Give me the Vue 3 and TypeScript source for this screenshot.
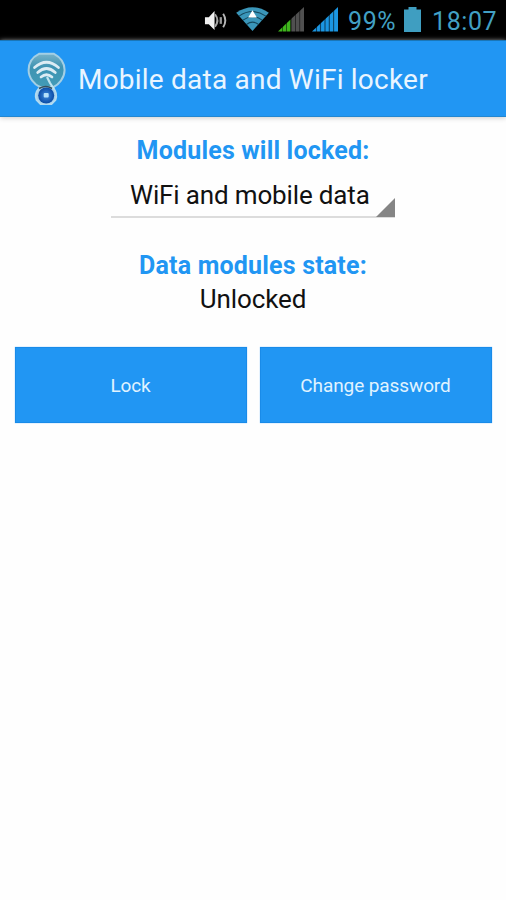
<script setup lang="ts">
import { ref } from 'vue'

const battery = '99%'
const clock = '18:07'
const selectedModule = ref('WiFi and mobile data')
const locked = ref(false)
</script>

<template>
  <div class="screen">
    <header class="status">
      <svg class="sound" viewBox="0 0 24 24">
        <path d="M1 8.500h4L11 2v20L5 16H1z" fill="#f0f0f0" />
        <path d="M11.500 5.500q5 6.500 0 13" fill="none" stroke="#a5a5a5" stroke-width="2" />
        <path d="M17.500 8.500v7" stroke="#9a9a9a" stroke-width="2.400" />
        <path d="M20 5q4.500 7 0 14" fill="none" stroke="#b5b5b5" stroke-width="2" />
      </svg>
      <svg class="wifi" viewBox="0 0 34 25">
        <path d="M0 6Q17-5.500 34 6L17 25z" fill="#3a96b9" />
        <path d="M3 9.500Q17 0 31 9.500M7 13.700Q17 6.500 27 13.700M11 18Q17 13.500 23 18" fill="none" stroke="#14475c" stroke-width="1.100" />
        <path d="M17 3.500l4.500 7.500h-9z" fill="#fff" />
      </svg>
      <svg class="signal" viewBox="0 0 26 25">
        <path d="M0 24.500L12.500 12.500v12z" fill="#3fb51d" />
        <path d="M13 12L26 0v24.500H13z" fill="#505050" />
        <path d="M4.500 18v7M8.500 14v11M13.200 10v15M17.500 6v19M21.700 2v23" stroke="#000" stroke-opacity=".5" stroke-width="1" />
      </svg>
      <svg class="signal second" viewBox="0 0 26 25">
        <path d="M0 24.500L26 0v24.500z" fill="#1b96e2" />
        <path d="M4.500 18v7M8.500 14v11M13 10v15M17.300 6v19M21.600 2v23" stroke="#000" stroke-opacity=".55" stroke-width="1.100" />
      </svg>
      <span class="percent">{{ battery }}</span>
      <svg class="battery" viewBox="0 0 17 25"><path d="M0 2.500h4.500V0h8v2.500H17V25H0z" fill="#3f9ec1" /></svg>
      <span class="clock">{{ clock }}</span>
    </header>
    <div class="appbar">
      <svg class="logo" viewBox="0 0 40 54">
        <defs>
          <linearGradient id="disc" x2="0" y2="1">
            <stop stop-color="#79b3c9" /><stop offset=".4" stop-color="#3f94b3" /><stop offset="1" stop-color="#429bb7" />
          </linearGradient>
          <radialGradient id="knob"><stop stop-color="#3d8ce0" /><stop offset="1" stop-color="#0c4ba5" /></radialGradient>
        </defs>
        <path d="M12 36q-5 6-2.500 12l4 4h11l4-4q2.500-7-3-13z" fill="#a5d0ea" stroke="#b3daf0" stroke-width="1.800" />
        <path d="M12 1.800h15C34 5.500 37.600 11 37.600 18c0 8-6 14.500-11 17H13C7.500 32.500 1.600 26 1.600 18 1.600 11 5.500 5 12 1.800z" fill="url(#disc)" stroke="#a3cfe5" stroke-width="2" />
        <path d="M7.500 15.500Q19.500 5 31.500 15.500M10.700 20.500Q19.500 12.500 28.300 20.500M14 25Q19.500 20.500 25 25" fill="none" stroke="#dcecf4" stroke-width="2.700" stroke-linecap="round" />
        <path d="M20 25l3 6 4 6" fill="none" stroke="#c0e4ef" stroke-width="2.200" />
        <path d="M12 36.500q7-4 13 0" fill="none" stroke="#35505e" stroke-width="1.600" />
        <circle cx="19.200" cy="43.500" r="8" fill="url(#knob)" />
        <rect x="16.700" y="41" width="5" height="4.500" rx="1" fill="#b5e0fa" />
      </svg>
      <h1>Mobile data and WiFi locker</h1>
    </div>
    <main>
      <h2 class="modules">Modules will locked:</h2>
      <div class="spinner">
        <span>{{ selectedModule }}</span>
        <svg class="corner" viewBox="0 0 19 19"><path d="M19 0v19H0z" fill="#858585" /></svg>
      </div>
      <h2 class="state">Data modules state:</h2>
      <p>{{ locked ? 'Locked' : 'Unlocked' }}</p>
      <div class="actions">
        <button class="lock" @click="locked = !locked"><span>{{ locked ? 'Unlock' : 'Lock' }}</span></button>
        <button class="change"><span>Change password</span></button>
      </div>
    </main>
  </div>
</template>

<style>
body { margin: 0; background: #fefefe; }
</style>

<style scoped>
.screen { width: 506px; height: 900px; overflow: hidden; background: #fefefe; font-family: Roboto, sans-serif; color: #111; }
.status { height: 40px; box-sizing: border-box; background: #000; display: flex; align-items: flex-start; padding: 7px 0 0 204px; color: #42a0c4; font-size: 25px; line-height: 29px; letter-spacing: .6px; white-space: nowrap; }
svg { display: block; flex: none; }
.sound { width: 23px; height: 23px; margin-top: 2px; }
.wifi { width: 33px; height: 24px; margin-left: 9px; }
.signal { width: 26px; height: 25px; margin-left: 9px; }
.second { margin-left: 8px; }
.percent { width: 49px; margin-left: 10px; }
.battery { width: 17px; height: 25px; margin-left: 7px; }
.clock { margin-left: 11px; }
.appbar { height: 77px; box-sizing: border-box; background: #2196f3; border-top: 1px solid #1976b8; border-bottom: 1px solid #2387d0; display: flex; align-items: flex-start; padding: 11px 0 0 27px; box-shadow: 0 1px 5px #ccc; }
.logo { width: 40px; height: 54px; }
h1 { margin: 11px 0 0 11px; font-size: 28px; line-height: 34px; font-weight: 400; letter-spacing: .22px; color: #e9f5ff; white-space: nowrap; }
main { display: flex; flex-direction: column; align-items: center; padding-top: 17px; }
h2 { margin: 0; font-size: 25px; line-height: 32px; font-weight: 700; letter-spacing: .18px; color: #2196f3; white-space: nowrap; }
h2.modules { padding-top: 1px; }
.spinner { box-sizing: border-box; width: 284px; height: 45px; margin-top: 6px; border-bottom: 2px solid #dcdcdc; padding-left: 19px; display: flex; justify-content: space-between; align-items: flex-start; font-size: 26px; line-height: 32px; white-space: nowrap; margin-bottom: 32px; padding-top: 6px; }
.spinner span { letter-spacing: -.15px; }
.corner { width: 19px; height: 19px; margin-top: 19px; }
p { margin: 1px 0 0; font-size: 26px; line-height: 32px; letter-spacing: -.1px; }
.actions { width: 477px; display: flex; gap: 13px; margin-top: 32px; }
button { flex: 1; height: 76px; border: 1px solid #198be9; border-radius: 0; background: #2196f3; color: #e0f3ff; font: 400 19px/24px Roboto, sans-serif; letter-spacing: -.1px; padding: 1px 0 0; box-shadow: 0 0 1px #6abaff; }
</style>
